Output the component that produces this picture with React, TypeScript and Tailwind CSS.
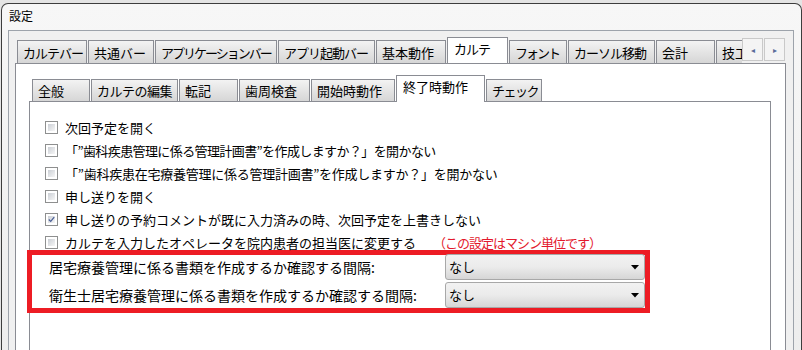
import { ReactNode } from "react"

const font = { fontFamily: '"Noto Sans CJK JP", "Noto Sans", sans-serif' }

// label, width, letter spacing (0 width = the selected tab)
const outerTabs: [string, number, string][] = [
  ["カルテバー", 70, "tracking-[-1px]"],
  ["共通バー", 66, "tracking-[0px]"],
  ["アプリケーションバー", 122, "tracking-[-2px]"],
  ["アプリ起動バー", 97, "tracking-[-1px]"],
  ["基本動作", 70, "tracking-[0px]"],
  ["カルテ", 0, "tracking-[-1px]"],
  ["フォント", 58, "tracking-[-2px]"],
  ["カーソル移動", 87, "tracking-[-1px]"],
  ["会計", 59, "tracking-[0px]"],
  ["技工", 40, "tracking-[0px]"],
]

const innerTabs: [string, number, string][] = [
  ["全般", 58, "tracking-[0px]"],
  ["カルテの編集", 87, "tracking-[-0.5px]"],
  ["転記", 59, "tracking-[0px]"],
  ["歯周検査", 71, "tracking-[0px]"],
  ["開始時動作", 84, "tracking-[0px]"],
  ["終了時動作", 0, "tracking-[0px]"],
  ["チェック", 56, "tracking-[-1.5px]"],
]

const rows: [string, boolean, string][] = [
  ["次回予定を開く", false, ""],
  ["「”歯科疾患管理に係る管理計画書”を作成しますか？」を開かない", false, "tracking-[-0.6px]"],
  ["「”歯科疾患在宅療養管理に係る管理計画書”を作成しますか？」を開かない", false, "tracking-[-0.25px]"],
  ["申し送りを開く", false, ""],
  ["申し送りの予約コメントが既に入力済みの時、次回予定を上書きしない", true, ""],
]

const Tab = ({ label, width, small, track }: { label: string; width: number; small?: boolean; track: string }) => (
  <div
    className={`shrink-0 ${small ? "h-[22px]" : "h-[23px]"} ${track} border border-b-0 border-[#8a8c93] bg-gradient-to-b from-[#f3f3f3] to-[#d6d6d6] flex items-center pl-[5px] mr-[1px] text-[13px] leading-none whitespace-nowrap overflow-hidden`}
    style={{ width }}
  >
    {label}
  </div>
)

const ActiveTab = ({ children, w, track }: { children: ReactNode; w: string; track: string }) => (
  <div
    className={`shrink-0 ${w} ${track} h-[27px] -mb-[1px] relative z-10 border border-b-0 border-[#8a8c93] bg-white flex items-start pt-[4px] pl-[6px] mr-[1px] text-[13px] leading-none whitespace-nowrap`}
  >
    {children}
  </div>
)

const Checkbox = ({ checked }: { checked: boolean }) => (
  <div className="w-[13px] h-[13px] border border-[#8e8f8f] bg-white p-[2px] shrink-0">
    <div className="w-full h-full bg-gradient-to-br from-[#cbcfd5] to-[#f6f6f6] flex items-center justify-center">
      {checked && (
        <svg width="9" height="9" viewBox="0 0 9 9">
          <path d="M1 4.5 L3.5 7 L8 1.5" fill="none" stroke="#4a5f97" strokeWidth="1.6" />
        </svg>
      )}
    </div>
  </div>
)

const Select = () => (
  <div className="w-[200px] h-[26px] border border-[#a8a8a8] rounded-[3px] bg-gradient-to-b from-[#f2f2f2] via-[#ebebeb] to-[#d6d6d6] flex items-center justify-between pl-[3px] pr-[5px] text-[13px]">
    <span>なし</span>
    <svg width="8" height="5" viewBox="0 0 8 5">
      <path d="M0 0 H8 L4 4.5 Z" fill="#000" />
    </svg>
  </div>
)

export default function App() {
  return (
    <div className="w-[802px] h-[350px] overflow-hidden bg-[#e4e4e4] pt-[3px] pl-[1px] text-black" style={font}>
      <div className="w-[801px] h-[400px] border border-b-0 border-[#3d3d3d] rounded-t-[7px] bg-gradient-to-b from-[#f7f7f7] to-[#ececec]">
        <div className="h-[26px] pl-[7px] pt-[6px] text-[12px] leading-none">設定</div>
        <div className="pl-[6px] pr-[7px]">
          <div className="border-l border-t border-r border-[#9da3ab] bg-[#f0f0f0] h-[400px] pt-[6px] pl-[6px] pr-[7px]">
            {/* outer tab strip */}
            <div className="flex items-end h-[26px] ml-[2px]">
              <div className="flex items-end w-[725px] overflow-hidden">
                {outerTabs.map(([label, w, t]) =>
                  w === 0 ? (
                    <ActiveTab key={label} w="w-[61px]" track={t}>{label}</ActiveTab>
                  ) : (
                    <Tab key={label} label={label} width={w} track={t} />
                  )
                )}
              </div>
              <div className="flex self-start mt-[1px] gap-[1px]">
                {["◂", "▸"].map((a) => (
                  <div
                    key={a}
                    className="w-[21px] h-[23px] border border-[#c9c9c9] bg-[#f4f4f4] flex items-center justify-center text-[8px] text-[#5a6c9a]"
                  >
                    {a}
                  </div>
                ))}
              </div>
            </div>
            {/* outer panel */}
            <div className="border border-[#8a8c93] bg-white h-[300px] pt-[11px] pl-[13px] pr-[14px]">
              <div className="flex items-end h-[26px] ml-[3px]">
                {innerTabs.map(([label, w, t]) =>
                  w === 0 ? (
                    <ActiveTab key={label} w="w-[89px]" track={t}>{label}</ActiveTab>
                  ) : (
                    <Tab key={label} label={label} width={w} track={t} small />
                  )
                )}
              </div>
              <div className="border border-[#8a8c93] bg-white h-[260px] pt-[14px]">
                {rows.map(([label, checked, t]) => (
                  <div key={label} className="h-[23px] flex items-center pl-[15px] gap-[7px] text-[13px] whitespace-nowrap">
                    <Checkbox checked={checked} />
                    <span className={t}>{label}</span>
                  </div>
                ))}
                <div className="h-[23px] flex items-center pl-[15px] gap-[7px] text-[13px] whitespace-nowrap">
                  <Checkbox checked={false} />
                  <span>カルテを入力したオペレータを院内患者の担当医に変更する</span>
                  <span className="ml-[10px] tracking-[-1px] text-[#e3192d]">（この設定はマシン単位です）</span>
                </div>
                <div className="-mt-[4px] -ml-[3px] w-[623px] border-[5px] border-[#ed1c24] flex flex-col gap-[2px] text-[14px]">
                  <div className="flex items-center -mt-[1px]">
                    <span className="w-[413px] pl-[17px] whitespace-nowrap">居宅療養管理に係る書類を作成するか確認する間隔:</span>
                    <Select />
                  </div>
                  <div className="flex items-center">
                    <span className="w-[413px] pl-[17px] whitespace-nowrap">衛生士居宅療養管理に係る書類を作成するか確認する間隔:</span>
                    <Select />
                  </div>
                </div>
              </div>
            </div>
          </div>
        </div>
      </div>
    </div>
  )
}
